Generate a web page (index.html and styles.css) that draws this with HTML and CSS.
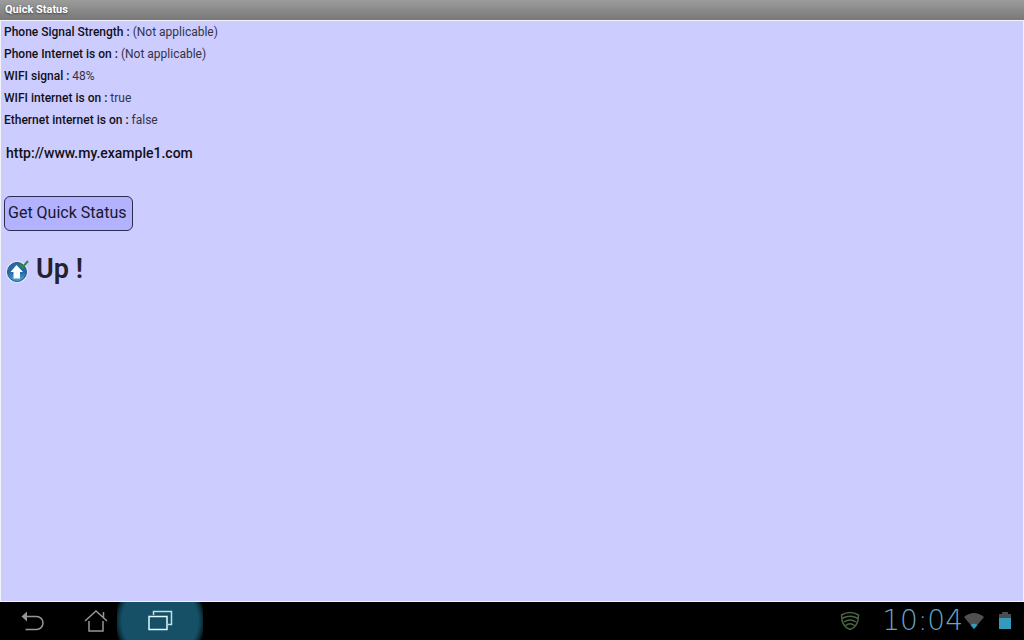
FILE: index.html
```html
<!DOCTYPE html>
<html lang="en">
<head>
    <meta charset="UTF-8">
    <meta name="viewport" content="width=device-width, initial-scale=1.0">
    <title>Quick Status</title>
    <link rel="stylesheet" href="styles.css">
</head>
<body>
    <header class="title-bar">
        <h1>Quick Status</h1>
    </header>

    <main class="content">
        <ul class="status-list">
            <li><b>Phone Signal Strength :</b> (Not applicable)</li>
            <li><b>Phone Internet is on :</b> (Not applicable)</li>
            <li><b>WIFI signal :</b> 48%</li>
            <li><b>WIFI internet is on :</b> true</li>
            <li><b>Ethernet internet is on :</b> false</li>
        </ul>

        <p class="site">http://www.my.example1.com</p>

        <button class="status-button" type="button">Get Quick Status</button>

        <div class="result">
            <svg class="result-icon" width="24" height="28" viewBox="0 0 24 28" aria-hidden="true">
                <defs>
                    <linearGradient id="ball" x1="0" y1="0" x2="0" y2="1">
                        <stop offset="0" stop-color="#2a6a9e"/>
                        <stop offset="0.5" stop-color="#2468a8"/>
                        <stop offset="1" stop-color="#4fa8dc"/>
                    </linearGradient>
                </defs>
                <circle cx="11" cy="17" r="11" fill="#dfe8f4"/>
                <circle cx="11" cy="17" r="9.5" fill="url(#ball)" stroke="#27537f" stroke-width="1"/>
                <path d="M10.5 10 L17 17 H14 V23.5 H7.5 V17 H4.5 Z" fill="#fff"/>
                <path d="M14 9.5 L16.5 12.5 L22 6" fill="none" stroke="#2f8a4c" stroke-width="2"/>
            </svg>
            <h2>Up !</h2>
        </div>
    </main>

    <footer class="nav-bar">
        <nav class="nav-buttons">
            <button type="button" aria-label="Back">
                <svg width="24" height="24" viewBox="0 0 24 24">
                    <path d="M6 7.5 H16.5 A6 6 0 0 1 16.5 20.5 H5.5" fill="none" stroke="#969696" stroke-width="1.5"/>
                    <path d="M1.5 7.5 L7 2.5 V12.5 Z" fill="#969696"/>
                </svg>
            </button>
            <button type="button" aria-label="Home">
                <svg width="24" height="24" viewBox="0 0 24 24">
                    <path d="M1 12 L12 2 L23 12 M19.5 8.5 V3 M5 12 V22 H19 V12" fill="none" stroke="#969696" stroke-width="1.5"/>
                </svg>
            </button>
            <button class="active" type="button" aria-label="Recent apps">
                <svg width="26" height="24" viewBox="0 0 26 24">
                    <path d="M6.5 6 V2.5 H24.5 V15.5 H21" fill="none" stroke="#b8e4ec" stroke-width="1.5"/>
                    <rect x="2" y="7.5" width="18" height="13" fill="none" stroke="#e4f8fb" stroke-width="1.5"/>
                </svg>
            </button>
        </nav>

        <div class="tray">
            <svg class="shield" width="20" height="20" viewBox="0 0 20 20" fill="none" stroke="#4a6444" stroke-width="1.5">
                <path d="M10 1.5 C13 1.5 16 2.5 18.5 4 C18.5 12 16 16.5 10 18.5 C4 16.5 1.5 12 1.5 4 C4 2.5 7 1.5 10 1.5 Z"/>
                <path d="M2 7.5 Q10 3 18 7.5 M4 11 Q10 7 16 11 M5.5 14.5 Q10 11 14.5 14.5"/>
            </svg>
            <time class="clock">10:04</time>
            <svg width="22" height="18" viewBox="0 0 22 18">
                <path d="M1 5 Q11 -3 21 5 L11 17 Z" fill="#505050"/>
                <path d="M7.5 13 Q11 10.5 14.5 13 L11 17 Z" fill="#369abd"/>
            </svg>
            <svg class="battery" width="12" height="18" viewBox="0 0 12 18">
                <path d="M3 0 H9 V2 H12 V6 H0 V2 H3 Z" fill="#484e50"/>
                <rect y="6" width="12" height="11" fill="#369abd"/>
            </svg>
        </div>
    </footer>
</body>
</html>
```
FILE: styles.css
```css
* {
    box-sizing: border-box;
}

body {
    display: flex;
    flex-direction: column;
    min-height: 100vh;
    margin: 0;
    background-color: #000;
    color: #333344;
    font-family: Roboto, sans-serif;
    font-size: 12px;
}

h1, h2, p, ul {
    margin: 0;
    padding: 0;
}

.title-bar {
    padding: 2px 5px;
    background: linear-gradient(#9c9c9c, #787878);
    color: #fff;
    text-shadow: 0 1px 2px #444;
}

.title-bar h1 {
    font-size: 11px;
    line-height: 16px;
}

.content {
    flex: 1;
    padding: 4px 3px;
    border: 1px solid #f2f2fb;
    background-color: #ccccff;
}

.status-list {
    display: grid;
    gap: 8px;
    list-style: none;
    line-height: 14px;
}

.status-list b {
    color: #111118;
    font-weight: 500;
}

.site {
    padding: 18px 2px 35px;
    color: #111118;
    font-size: 14px;
    font-weight: 500;
    line-height: 16px;
}

.status-button {
    display: block;
    padding: 6px 5px 8px 3px;
    border: 1px solid #2c2c50;
    border-radius: 6px;
    background-color: #b2b2ff;
    color: #18182c;
    font-family: inherit;
    font-size: 16px;
    line-height: 19px;
}

.result {
    display: flex;
    align-items: center;
    gap: 6px;
    padding: 21px 2px;
}

.result h2 {
    color: #222230;
    font-size: 27px;
    font-weight: 600;
    line-height: 34px;
}

.nav-bar {
    display: flex;
    justify-content: space-between;
    height: 38px;
    background-color: #000;
}

.nav-buttons {
    display: flex;
}

.nav-buttons button {
    display: flex;
    align-items: center;
    justify-content: center;
    width: 64px;
    padding: 0;
    border: 0;
    background: none;
}

.nav-buttons .active {
    width: 86px;
    margin-left: -11px;
    background: radial-gradient(circle, #155066 38px, #0c3442 42px, #000 46px);
}

.tray {
    display: flex;
    align-items: center;
    padding-right: 13px;
}

.shield {
    margin-right: 22px;
}

.clock {
    color: #65a6c5;
    font-family: "DejaVu Sans", sans-serif;
    font-size: 28px;
    font-weight: 200;
    line-height: 38px;
}

.battery {
    margin-left: 14px;
}
```
